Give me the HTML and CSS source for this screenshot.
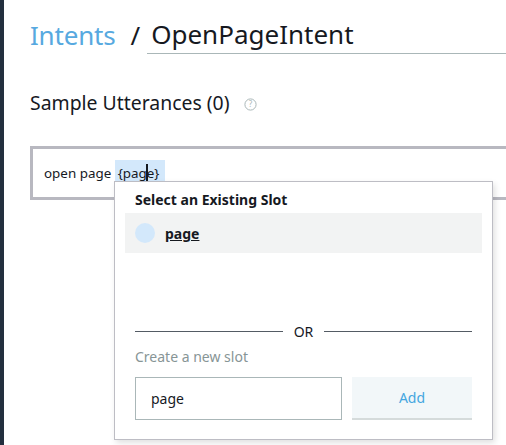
FILE: index.html
```html
<!DOCTYPE html>
<html>
<head>
<meta charset="utf-8">
<link rel="stylesheet" href="styles.css">
</head>
<body>
<div class="app">
  <div class="sidebar"></div>
  <main class="main">
    <div class="header">
      <a class="crumb">Intents</a>
      <span class="sep">/</span>
      <div class="title">OpenPageIntent</div>
    </div>
    <h2 class="section">Sample Utterances (0)
      <svg class="help" width="13" height="13" viewBox="0 0 13 13"><circle cx="6.5" cy="6.5" r="5.6" fill="none" stroke="#aab7b8" stroke-width="1"/><text x="6.5" y="9.3" text-anchor="middle" font-size="8" fill="#aab7b8" font-family="Noto Sans, sans-serif">?</text></svg>
    </h2>
    <div class="utter">
      <span class="utext">open page <span class="slot">{pag<span class="caret"></span>e}</span></span>
      <div class="dropdown">
        <div class="dd-title">Select an Existing Slot</div>
        <div class="dd-item"><span class="dot"></span><span class="dd-name">page</span></div>
        <div class="dd-empty"></div>
        <div class="or"><span class="line"></span><span class="or-text">OR</span><span class="line"></span></div>
        <div class="create-label">Create a new slot</div>
        <div class="create-row">
          <div class="slot-input">page</div>
          <button class="add">Add</button>
        </div>
      </div>
    </div>
  </main>
</div>
</body>
</html>
```
FILE: styles.css
```css
* { box-sizing: border-box; }
html, body { margin: 0; padding: 0; background: #fff; }
body { font-family: "Noto Sans", "Open Sans", sans-serif; color: #16191f; width: 506px; height: 445px; overflow: hidden; }
.app { display: flex; height: 445px; }
.sidebar { width: 4px; background: #232f3e; flex: none; }
.main { flex: 1; padding-left: 26px; position: relative; }
.header { display: flex; align-items: flex-end; height: 54px; }
.crumb { color: #57a9e0; font-size: 26px; line-height: 26px; padding-bottom: 6px; letter-spacing: -0.2px; }
.sep { font-size: 26px; line-height: 26px; margin-left: 15px; padding-bottom: 6px; }
.title { flex: 1; margin-left: 7px; font-size: 26px; line-height: 26px; padding: 0 0 6px 4px; border-bottom: 1px solid #aab7b8; }
.section { font-size: 19.4px; font-weight: 400; margin: 37px 0 0; display: flex; align-items: center; line-height: 24px; }
.help { margin-left: 15px; margin-top: 2px; }
.utter { position: relative; margin-top: 31px; height: 54px; border: 3px solid #b8b8c0; border-right: none; display: flex; align-items: center; padding-left: 11px; }
.utext { font-size: 13.4px; }
.slot { background: #d3e8fb; padding: 4px 6px 5px 3px; margin-left: 0; position: relative; }
.caret { display: inline-block; width: 2px; height: 19px; background: #16191f; vertical-align: -5px; margin: 0 -1px 0 -1px; }
.dropdown { position: absolute; left: 81px; top: 32px; width: 379px; height: 259px; background: #fff; border: 1px solid #bdbdc4; box-shadow: 2px 3px 6px rgba(0,0,0,0.12); padding: 8px 10px 0 10px; }
.dd-title { font-weight: 700; font-size: 14px; padding-left: 10px; line-height: 20px; }
.dd-item { background: #f2f3f3; height: 40px; margin-top: 3px; display: flex; align-items: center; padding-left: 10px; }
.dot { width: 20px; height: 20px; border-radius: 50%; background: #d3e8fb; flex: none; }
.dd-name { font-weight: 700; font-size: 14px; text-decoration: underline; margin-left: 10px; }
.dd-empty { height: 68px; }
.or { display: flex; align-items: center; padding: 0 10px; height: 20px; }
.line { flex: 1; height: 1px; background: #545b64; }
.or-text { font-size: 14px; padding: 0 11px; }
.create-label { color: #879596; font-size: 14px; padding-left: 10px; margin-top: 6px; line-height: 20px; }
.create-row { display: flex; padding: 0 10px; margin-top: 10px; gap: 10px; }
.slot-input { width: 207px; height: 43px; border: 1px solid #aab7b8; font-size: 14px; display: flex; align-items: center; padding-left: 15px; }
.add { width: 120px; height: 43px; border: none; border-bottom: 2px solid #d5dbdb; background: #f2f7f9; color: #44a6e0; font-family: inherit; font-size: 14px; padding: 0; }
```
